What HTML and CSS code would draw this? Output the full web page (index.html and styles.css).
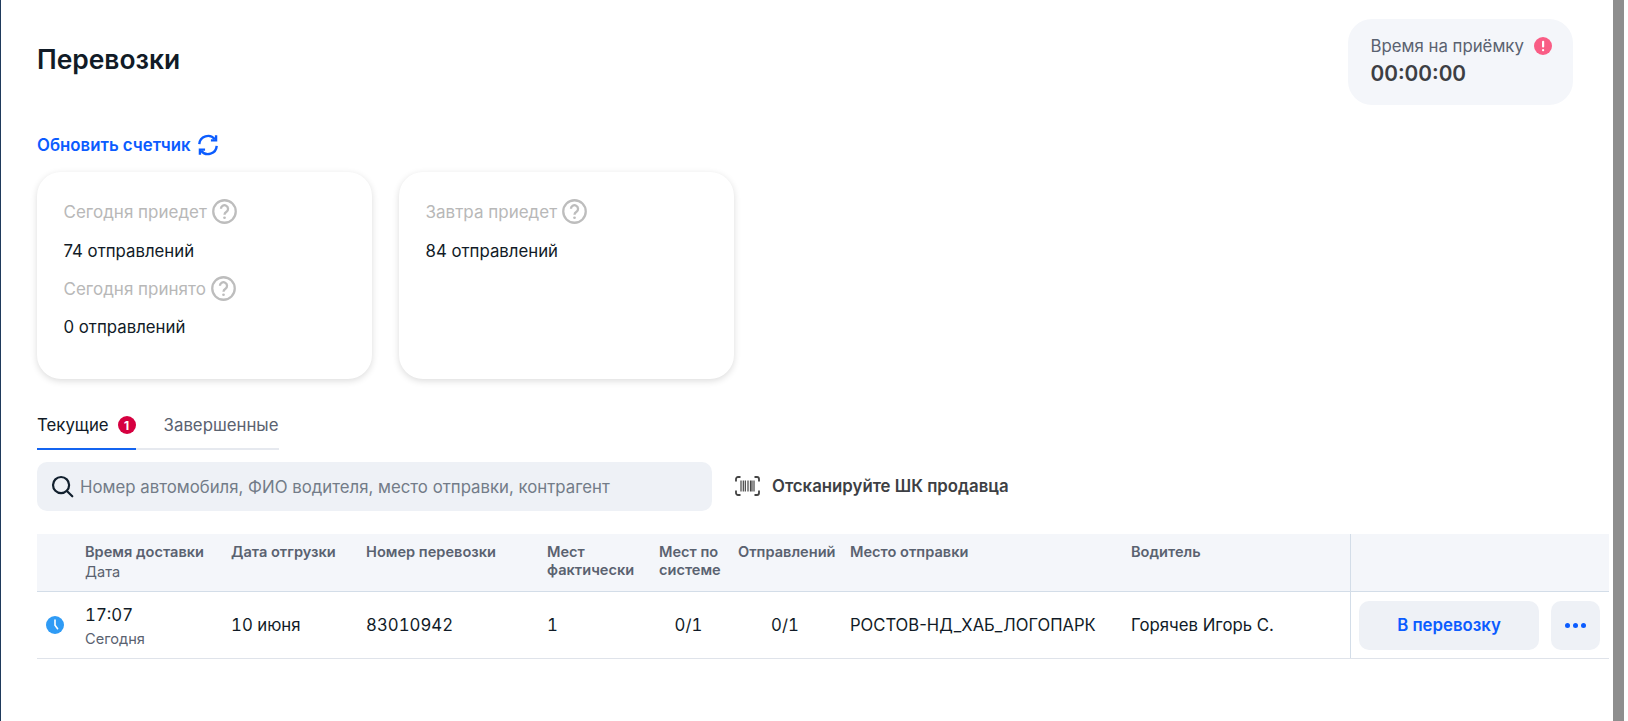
FILE: index.html
```html
<!DOCTYPE html>
<html lang="ru">
<head>
<meta charset="utf-8">
<title>Перевозки</title>
<link rel="stylesheet" href="styles.css">
</head>
<body>
<div class="frame">
  <main class="content">
    <header class="top">
      <h1 class="title">Перевозки</h1>
      <div class="timer">
        <div class="timer-label">Время на приёмку
          <svg class="alert" viewBox="0 0 18 18" width="18" height="18"><circle cx="9" cy="9" r="9" fill="#f95d85"/><rect x="8" y="3.8" width="2.2" height="6.8" rx="1" fill="#fff"/><rect x="8" y="12" width="2.2" height="2.2" rx="1" fill="#fff"/></svg>
        </div>
        <div class="timer-value">00:00:00</div>
      </div>
    </header>

    <a class="refresh">Обновить счетчик
      <svg viewBox="0 0 24 24" width="22" height="22" fill="none" stroke="#0b5cff" stroke-width="2.6"><path d="M2.5 11a9.5 9.5 0 0 1 17-5.2"/><path d="M21.5 13a9.5 9.5 0 0 1-17 5.2"/><path d="M20.8 1.4v5.6h-5.6"/><path d="M3.2 22.6V17h5.6"/></svg>
    </a>

    <section class="cards">
      <article class="card">
        <div class="card-label">Сегодня приедет <svg class="q" viewBox="0 0 24 24" width="25" height="25"><circle cx="12" cy="12" r="10.8" fill="none" stroke="#bdbdbd" stroke-width="2.2"/><path d="M8.6 9.4a3.4 3.4 0 1 1 5.3 2.8c-1.2.8-1.9 1.4-1.9 2.8" fill="none" stroke="#bdbdbd" stroke-width="2.2"/><circle cx="12" cy="18" r="1.3" fill="#bdbdbd"/></svg></div>
        <div class="card-value">74 отправлений</div>
        <div class="card-label">Сегодня принято <svg class="q" viewBox="0 0 24 24" width="25" height="25"><circle cx="12" cy="12" r="10.8" fill="none" stroke="#bdbdbd" stroke-width="2.2"/><path d="M8.6 9.4a3.4 3.4 0 1 1 5.3 2.8c-1.2.8-1.9 1.4-1.9 2.8" fill="none" stroke="#bdbdbd" stroke-width="2.2"/><circle cx="12" cy="18" r="1.3" fill="#bdbdbd"/></svg></div>
        <div class="card-value tight">0 отправлений</div>
      </article>
      <article class="card">
        <div class="card-label">Завтра приедет <svg class="q" viewBox="0 0 24 24" width="25" height="25"><circle cx="12" cy="12" r="10.8" fill="none" stroke="#bdbdbd" stroke-width="2.2"/><path d="M8.6 9.4a3.4 3.4 0 1 1 5.3 2.8c-1.2.8-1.9 1.4-1.9 2.8" fill="none" stroke="#bdbdbd" stroke-width="2.2"/><circle cx="12" cy="18" r="1.3" fill="#bdbdbd"/></svg></div>
        <div class="card-value">84 отправлений</div>
      </article>
    </section>

    <nav class="tabs">
      <div class="tab active">Текущие <span class="badge">1</span></div>
      <div class="tab">Завершенные</div>
    </nav>

    <div class="search-row">
      <div class="search">
        <svg viewBox="0 0 24 24" width="23" height="23" fill="none" stroke="#12202e" stroke-width="2.3"><circle cx="10.5" cy="10.5" r="8.4"/><path d="M16.6 16.6l5.6 5.6" stroke-linecap="round"/></svg>
        <span>Номер автомобиля, ФИО водителя, место отправки, контрагент</span>
      </div>
      <div class="scan">
        <svg viewBox="0 0 25 20" width="25" height="20" fill="none" stroke="#444" stroke-width="1.8"><path d="M1 5.5V3a2 2 0 0 1 2-2h2.5M19.5 1H22a2 2 0 0 1 2 2v2.5M24 14.5V17a2 2 0 0 1-2 2h-2.5M5.500 19H3a2 2 0 0 1-2-2v-2.500"/><path d="M6 4.500v11M8.300 4.500v11M10.300 4.500v11M13 4.500v11M15.500 4.500v11M17 4.500v11M19 4.500v11" stroke-width="1.200"/></svg>
        <span>Отсканируйте ШК продавца</span>
      </div>
    </div>

    <div class="table">
      <div class="row head">
        <div class="c c-icon"></div>
        <div class="c c-time"><b>Время доставки</b><span class="sub">Дата</span></div>
        <div class="c c-date"><b>Дата отгрузки</b></div>
        <div class="c c-num"><b>Номер перевозки</b></div>
        <div class="c c-fact"><b>Мест<br>фактически</b></div>
        <div class="c c-sys"><b>Мест по<br>системе</b></div>
        <div class="c c-ship"><b>Отправлений</b></div>
        <div class="c c-place"><b>Место отправки</b></div>
        <div class="c c-driver"><b>Водитель</b></div>
        <div class="c c-actions"></div>
      </div>
      <div class="row body">
        <div class="c c-icon"><svg viewBox="0 0 18 18" width="18" height="18"><circle cx="9" cy="9" r="9" fill="#2f9bf5"/><path d="M9 4v5.300l2.600 3.400" fill="none" stroke="#fff" stroke-width="1.600" stroke-linecap="round"/></svg></div>
        <div class="c c-time"><span class="time">17:07</span><span class="sub">Сегодня</span></div>
        <div class="c c-date">10 июня</div>
        <div class="c c-num">83010942</div>
        <div class="c c-fact">1</div>
        <div class="c c-sys center">0/1</div>
        <div class="c c-ship center">0/1</div>
        <div class="c c-place">РОСТОВ-НД_ХАБ_ЛОГОПАРК</div>
        <div class="c c-driver">Горячев Игорь С.</div>
        <div class="c c-actions">
          <button class="btn main">В перевозку</button>
          <button class="btn more"><i></i><i></i><i></i></button>
        </div>
      </div>
    </div>
  </main>
  <div class="scrollbar"><div class="thumb"></div></div>
</div>
</body>
</html>
```

FILE: styles.css
```css
* { box-sizing: border-box; }
html, body { margin: 0; height: 100%; overflow: hidden; background: #fff; }
body { font-family: Inter, "Liberation Sans", sans-serif; color: #111b27; }
.frame { display: flex; height: 721px; border-left: 1px solid #1f3a5c; }
.content { flex: 1; min-width: 0; padding: 19px 4px 0 36px; }
.top { display: flex; justify-content: space-between; align-items: flex-start; padding-right: 36px; height: 86px; }
.title { margin: 24px 0 0; font-size: 26.4px; line-height: 32px; font-weight: 600; color: #111b27; }
.timer { width: 225px; height: 86px; background: #f4f6fa; border-radius: 24px; padding: 15px 20px 15px 22.500px; }
.timer-label { display: flex; align-items: center; gap: 10px; font-size: 16.8px; line-height: 24px; color: #5a6270; white-space: nowrap; }
.alert { flex: none; }
.timer-value { font-size: 20.800px; line-height: 30px; margin-top: 1px; font-weight: 600; color: #3d3f44; }
.refresh { display: flex; align-items: center; gap: 6px; margin-top: 28px; height: 24px; color: #0b5cff; font-size: 16.8px; font-weight: 600; }
.cards { display: flex; gap: 27px; margin-top: 15px; }
.card { width: 335px; height: 207px; background: #fff; border-radius: 24px; padding: 27px 26.500px; box-shadow: 0 2px 7px rgba(0,0,0,.14); }
.card-label { display: flex; align-items: center; gap: 5px; height: 25px; font-size: 17px; color: #b8b8b8; }
.q { flex: none; }
.card-value { margin: 16px 0 14px; height: 22px; font-size: 16.8px; line-height: 22px; color: #111b27; }
.card-value.tight { margin-top: 15px; }
.tabs { display: flex; width: fit-content; margin-top: 31px; gap: 28px; border-bottom: 2px solid #e6e9ef; height: 40px; }
.tab { display: flex; align-items: center; gap: 9px; height: 40px; padding-bottom: 10px; font-size: 16.8px; color: #5a6270; }
.tab.active { color: #111b27; border-bottom: 2px solid #1464f0; padding-bottom: 8px; }
.badge { display: flex; align-items: center; justify-content: center; width: 18px; height: 18px; border-radius: 50%; background: #d60040; color: #fff; font-size: 12px; font-weight: 700; }
.search-row { display: flex; align-items: center; margin-top: 12px; }
.search { display: flex; align-items: center; gap: 6px; width: 675px; height: 49px; background: #eef1f6; border-radius: 10px; padding: 0 14px; font-size: 16.8px; color: #737c88; }
.scan { display: flex; align-items: center; gap: 12px; margin-left: 23px; padding-bottom: 2px; font-size: 16.8px; font-weight: 600; color: #3d3f44; }
.table { margin-top: 23px; }
.row { display: flex; }
.row.head { height: 58px; background: #f4f6fa; border-bottom: 1px solid #d3dde8; font-size: 14.6px; color: #5a6270; }
.row.body { height: 67px; border-bottom: 1px solid #dfe3ea; font-size: 16.8px; align-items: stretch; color: #111b27; }
.body .c-date, .body .c-num, .body .c-fact, .body .c-sys, .body .c-ship { font-variant-numeric: tabular-nums; }
.c { display: flex; flex-direction: column; justify-content: center; flex: none; }
.head .c { justify-content: flex-start; padding-top: 9px; line-height: 18px; }
.head b { font-weight: 600; }
.sub { font-size: 14.6px; line-height: 20px; color: #5a6270; font-weight: 400; }
.head .sub { margin-top: 1px; }
.time { font-size: 16.8px; line-height: 24px; margin: 2px 0; font-variant-numeric: tabular-nums; }
.c-icon { width: 48px; padding-left: 9px; }
.c-time { width: 146px; }
.c-date { width: 135px; }
.c-num { width: 181px; }
.c-fact { width: 112px; }
.c-sys { width: 79px; white-space: nowrap; }
.c-ship { width: 112px; white-space: nowrap; }
.c-place { width: 281px; white-space: nowrap; }
.body .c-place { font-size: 16.6px; }
.c-driver { width: 219px; white-space: nowrap; }
.c-actions { flex: 1; flex-direction: row; align-items: center; justify-content: flex-start; gap: 12px; padding-left: 8px; border-left: 1px solid #d3dde8; }
.head .c-actions { padding-top: 0; }
.center { align-items: center; padding-right: 20px; }
.c-ship.center { padding-right: 18px; }
.btn { border: 0; background: #eef1f6; border-radius: 10px; height: 49px; color: #0b5cff; font-family: inherit; font-size: 16.8px; font-weight: 600; }
.main { width: 180px; }
.more { width: 49px; display: flex; align-items: center; justify-content: center; gap: 3px; }
.more i { width: 5px; height: 5px; border-radius: 50%; background: #0b5cff; }
.scrollbar { width: 15px; display: flex; }
.thumb { width: 11px; height: 100%; background: #8e8e8e; }
```
